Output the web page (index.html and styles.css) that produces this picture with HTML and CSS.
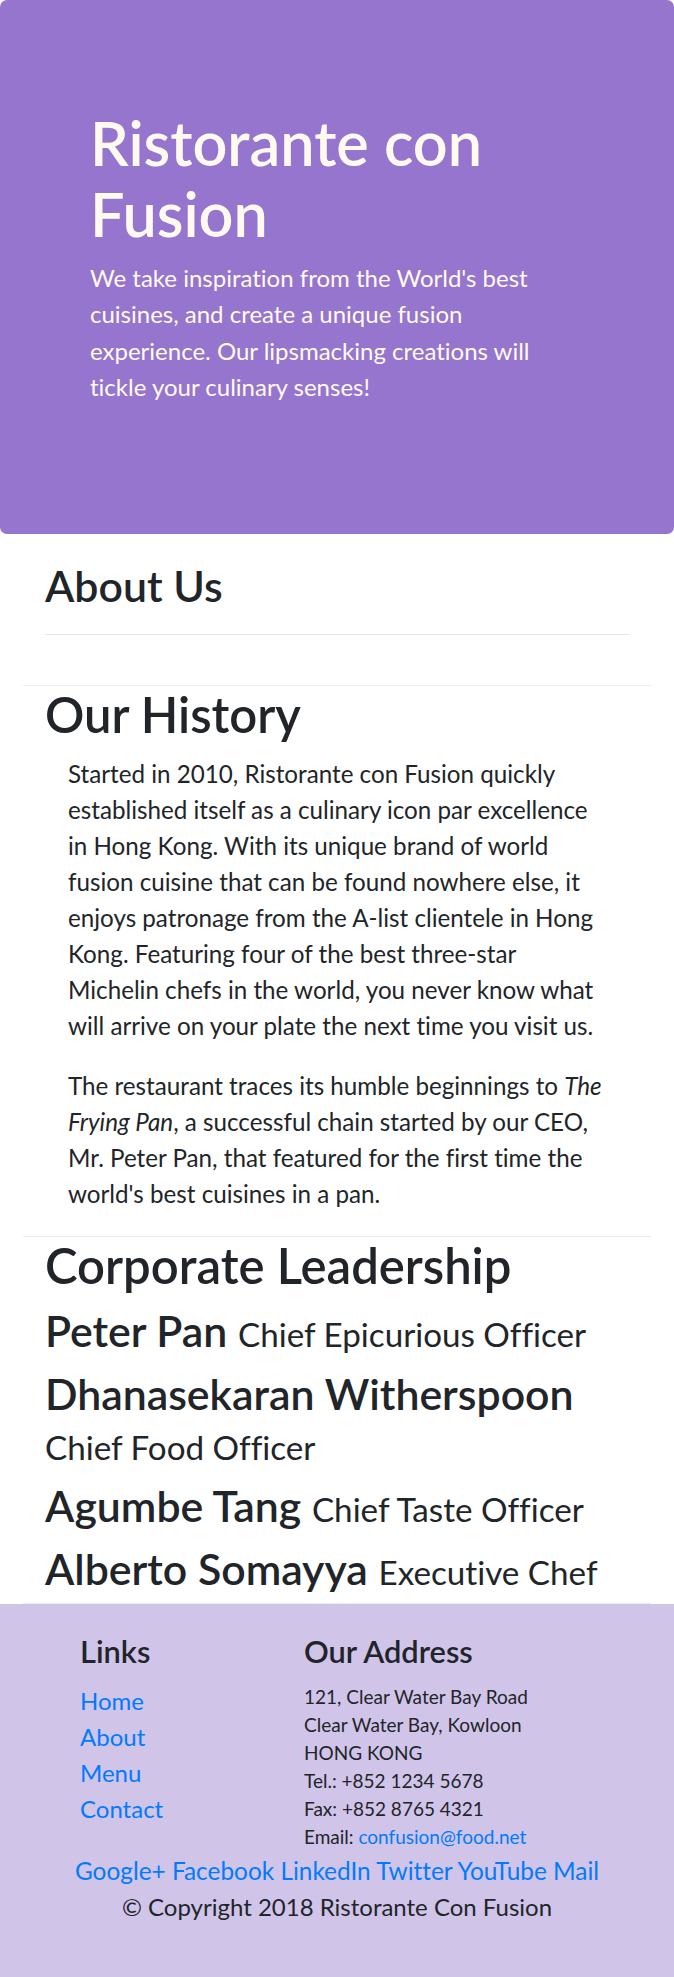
FILE: index.html
```html
<!DOCTYPE html>
<html lang="en">
<head>
<meta charset="utf-8">
<title>Ristorante con Fusion - About Us</title>
<link rel="stylesheet" href="styles.css">
</head>
<body>
<header class="jumbotron">
  <div class="jumbo-inner">
    <h1 class="jumbo-title">Ristorante con Fusion</h1>
    <p class="jumbo-text">We take inspiration from the World's best cuisines, and create a unique fusion experience. Our lipsmacking creations will tickle your culinary senses!</p>
  </div>
</header>

<main class="container">
  <section class="row about-row">
    <div class="col">
      <h3 class="heading-3">About Us</h3>
      <hr class="divider">
    </div>
  </section>

  <section class="row history-row">
    <div class="col">
      <h2 class="heading-2">Our History</h2>
      <p class="history-text">Started in 2010, Ristorante con Fusion quickly established itself as a culinary icon par excellence in Hong Kong. With its unique brand of world fusion cuisine that can be found nowhere else, it enjoys patronage from the A-list clientele in Hong Kong. Featuring four of the best three-star Michelin chefs in the world, you never know what will arrive on your plate the next time you visit us.</p>
      <p class="history-text">The restaurant traces its humble beginnings to <em>The Frying Pan</em>, a successful chain started by our CEO, Mr. Peter Pan, that featured for the first time the world's best cuisines in a pan.</p>
    </div>
  </section>

  <section class="row leaders-row">
    <div class="col">
      <h2 class="heading-2">Corporate Leadership</h2>
      <h3 class="leader">Peter Pan <small class="leader-role">Chief Epicurious Officer</small></h3>
      <h3 class="leader">Dhanasekaran Witherspoon <small class="leader-role">Chief Food Officer</small></h3>
      <h3 class="leader">Agumbe Tang <small class="leader-role">Chief Taste Officer</small></h3>
      <h3 class="leader">Alberto Somayya <small class="leader-role">Executive Chef</small></h3>
    </div>
  </section>
</main>

<footer class="footer">
  <div class="footer-cols">
    <div class="footer-links">
      <h5 class="footer-heading">Links</h5>
      <ul class="link-list">
        <li><a href="#" class="link">Home</a></li>
        <li><a href="#" class="link">About</a></li>
        <li><a href="#" class="link">Menu</a></li>
        <li><a href="#" class="link">Contact</a></li>
      </ul>
    </div>
    <div class="footer-address">
      <h5 class="footer-heading">Our Address</h5>
      <address class="address">
        121, Clear Water Bay Road<br>
        Clear Water Bay, Kowloon<br>
        HONG KONG<br>
        Tel.: +852 1234 5678<br>
        Fax: +852 8765 4321<br>
        Email: <a href="#" class="link">confusion@food.net</a>
      </address>
    </div>
  </div>
  <div class="social">
    <a href="#" class="link">Google+</a>
    <a href="#" class="link">Facebook</a>
    <a href="#" class="link">LinkedIn</a>
    <a href="#" class="link">Twitter</a>
    <a href="#" class="link">YouTube</a>
    <a href="#" class="link">Mail</a>
  </div>
  <p class="copyright">© Copyright 2018 Ristorante Con Fusion</p>
</footer>
</body>
</html>
```

FILE: styles.css
```css
* { box-sizing: border-box; }

html, body {
  margin: 0;
  padding: 0;
}

body {
  font-family: Lato, "Open Sans", sans-serif;
  font-size: 24px;
  line-height: 36px;
  color: #212529;
  background: #ffffff;
  font-variant-ligatures: none;
}

/* ---------- Jumbotron ---------- */
.jumbotron {
  height: 534px;
  padding: 108px 0 0 90px;
  background: #9575cd;
  color: #fffaf0;
  border-radius: 7px;
}

.jumbo-inner {
  width: 465px;
}

.jumbo-title {
  margin: 0;
  font-size: 61.2px;
  line-height: 70.8px;
  font-weight: 600;
}

.jumbo-text {
  margin: 10px 0 0;
  font-size: 24px;
  line-height: 36.5px;
}

/* ---------- Main ---------- */
.container {
  margin: 0 23px;
}

.row {
  border-bottom: 1px solid #ebebeb;
}

.col {
  padding: 0 22px;
}

.about-row {
  padding-top: 26.5px;
}

.heading-3 {
  margin: 0;
  font-size: 42.8px;
  line-height: 50.4px;
  font-weight: 600;
}

.divider {
  margin: 23px 0 50px;
  border: 0;
  border-top: 1px solid #e6e6e6;
  height: 0;
}

.heading-2 {
  margin: 0 0 12px;
  font-size: 49px;
  line-height: 57.6px;
  font-weight: 600;
}

.history-text {
  margin: 0 0 24px;
  padding: 0 23px;
  font-size: 24.2px;
  line-height: 36px;
}

.leader {
  margin: 0 0 12px;
  font-size: 42.8px;
  line-height: 50.4px;
  font-weight: 600;
}

.leader:last-child {
  margin-bottom: 8.8px;
}

.leader-role {
  font-size: 33.2px;
  line-height: 1;
  font-weight: 400;
}

/* ---------- Footer ---------- */
.footer {
  background: #d1c4e9;
  padding: 30px 23px 52px;
}

.footer-cols {
  display: flex;
}

.footer-links {
  width: 281px;
  padding-left: 57px;
}

.footer-address {
  flex: 1;
}

.footer-heading {
  margin: 0 0 13px;
  font-size: 30.8px;
  line-height: 36px;
  font-weight: 600;
}

.link-list {
  margin: 0;
  padding: 0;
  list-style: none;
  font-size: 24px;
  line-height: 36px;
}

.link {
  color: #007bff;
  text-decoration: none;
}

.address {
  margin: 0;
  font-style: normal;
  font-size: 19px;
  line-height: 28px;
}

.social {
  margin-top: 2px;
  text-align: center;
  font-size: 24.4px;
  line-height: 36px;
}

.copyright {
  margin: 0;
  text-align: center;
  font-size: 24px;
  line-height: 36px;
}
```
